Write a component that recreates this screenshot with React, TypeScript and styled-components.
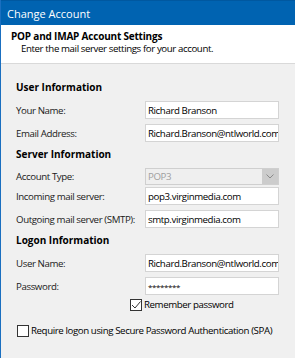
import React from "react";
import styled, { createGlobalStyle } from "styled-components";

const GlobalStyle = createGlobalStyle`
  html, body {
    margin: 0;
    padding: 0;
    background: #f0f0f0;
  }
  body {
    font-family: "Open Sans", "Noto Sans", sans-serif;
    font-size: 9.7px;
    letter-spacing: -0.4px;
    color: #000;
  }
`;

const Window = styled.div`
  width: 295px;
  height: 358px;
  box-sizing: border-box;
  border-left: 1px solid #1a6fc0;
  background: #f0f0f0;
  overflow: hidden;
  display: flex;
  flex-direction: column;
`;

const TitleBar = styled.div`
  height: 25px;
  flex: none;
  background: #0063b1;
  color: #fff;
  font-size: 11px;
  letter-spacing: 0;
  display: flex;
  align-items: center;
  padding-left: 6px;
  border-top: 1px solid #0058a0;
  box-sizing: border-box;
`;

const Banner = styled.div`
  height: 39px;
  flex: none;
  background: #fff;
  border-bottom: 1px solid #d9d9d9;
  box-sizing: border-box;
  padding: 5px 0 0 10px;
`;

const BannerTitle = styled.div`
  font-weight: 700;
  font-size: 10px;
  letter-spacing: -0.2px;
  line-height: 13px;
`;

const BannerText = styled.div`
  padding-left: 10px;
  line-height: 12px;
`;

const Body = styled.div`
  padding: 16px 0 0 15px;
  display: flex;
  flex-direction: column;
`;

const Section = styled.div`
  display: flex;
  flex-direction: column;
  margin-bottom: 5px;
`;

const Heading = styled.div`
  font-weight: 700;
  font-size: 10px;
  letter-spacing: 0;
  line-height: 14px;
  margin-bottom: 7px;
`;

const Rows = styled.div`
  display: flex;
  flex-direction: column;
  gap: 5px;
`;

const Row = styled.div<{ $tight?: boolean }>`
  display: flex;
  align-items: center;
  margin-bottom: ${(p) => (p.$tight ? "-3px" : "0")};
`;

const Label = styled.div`
  width: 129px;
  flex: none;
  color: #1a1a1a;
  white-space: nowrap;
`;

const Field = styled.div<{ $masked?: boolean }>`
  width: 134px;
  height: 18px;
  box-sizing: border-box;
  background: #fff;
  border: 1px solid #d4d4d4;
  padding-left: 2px;
  display: flex;
  align-items: center;
  white-space: nowrap;
  overflow: hidden;
  font-size: ${(p) => (p.$masked ? "8px" : "inherit")};
`;

const Select = styled.div`
  width: 134px;
  height: 17px;
  box-sizing: border-box;
  border: 1px solid #cfcfcf;
  background: #efefef;
  display: flex;
  align-items: center;
  color: #a0a0a0;
`;

const SelectValue = styled.div`
  flex: 1;
  padding-left: 2px;
`;

const SelectButton = styled.div`
  width: 16px;
  height: 100%;
  background: #cccccc;
  display: flex;
  align-items: center;
  justify-content: center;
`;

const Check = styled.label<{ $indent?: number }>`
  display: flex;
  align-items: center;
  gap: 2px;
  line-height: 14px;
  white-space: nowrap;
  margin-left: ${(p) => p.$indent ?? 0}px;
`;

const Box = styled.div`
  width: 12px;
  height: 12px;
  flex: none;
  box-sizing: border-box;
  border: 1px solid #333;
  background: #fff;
  display: flex;
  align-items: center;
  justify-content: center;
`;

const Remember = styled.div`
  margin-top: -2px;
`;

const Spa = styled.div`
  margin-top: 12px;
`;

const fields = {
  user: [
    ["Your Name:", "Richard Branson"],
    ["Email Address:", "Richard.Branson@ntlworld.com"],
  ],
  server: [
    ["Incoming mail server:", "pop3.virginmedia.com"],
    ["Outgoing mail server (SMTP):", "smtp.virginmedia.com"],
  ],
  logon: [
    ["User Name:", "Richard.Branson@ntlworld.com"],
    ["Password:", "********"],
  ],
};

const FieldRow = ({ label, value }: { label: string; value: string }) => (
  <Row>
    <Label>{label}</Label>
    <Field $masked={label === "Password:"}>{value}</Field>
  </Row>
);

const App = () => {
  return (
    <Window>
      <GlobalStyle />
      <TitleBar>Change Account</TitleBar>
      <Banner>
        <BannerTitle>POP and IMAP Account Settings</BannerTitle>
        <BannerText>Enter the mail server settings for your account.</BannerText>
      </Banner>
      <Body>
        <Section>
          <Heading>User Information</Heading>
          <Rows>
            {fields.user.map(([l, v]) => (
              <FieldRow key={l} label={l} value={v} />
            ))}
          </Rows>
        </Section>
        <Section>
          <Heading>Server Information</Heading>
          <Rows>
            <Row $tight>
              <Label>Account Type:</Label>
              <Select>
                <SelectValue>POP3</SelectValue>
                <SelectButton>
                  <svg width="8" height="5" viewBox="0 0 8 5">
                    <path d="M0.5 0.5 L4 4 L7.5 0.5" fill="none" stroke="#8a8a8a" strokeWidth="1" />
                  </svg>
                </SelectButton>
              </Select>
            </Row>
            {fields.server.map(([l, v]) => (
              <FieldRow key={l} label={l} value={v} />
            ))}
          </Rows>
        </Section>
        <Section>
          <Heading>Logon Information</Heading>
          <Rows>
            {fields.logon.map(([l, v]) => (
              <FieldRow key={l} label={l} value={v} />
            ))}
          </Rows>
        </Section>
        <Remember>
          <Check $indent={114}>
            <Box>
              <svg width="10" height="10" viewBox="0 0 10 10">
                <path d="M1 5 L4 8 L9.5 1.5" fill="none" stroke="#333" strokeWidth="1" />
              </svg>
            </Box>
            Remember password
          </Check>
        </Remember>
        <Spa>
          <Check $indent={1}>
            <Box />
            Require logon using Secure Password Authentication (SPA)
          </Check>
        </Spa>
      </Body>
    </Window>
  );
};

export default App;
